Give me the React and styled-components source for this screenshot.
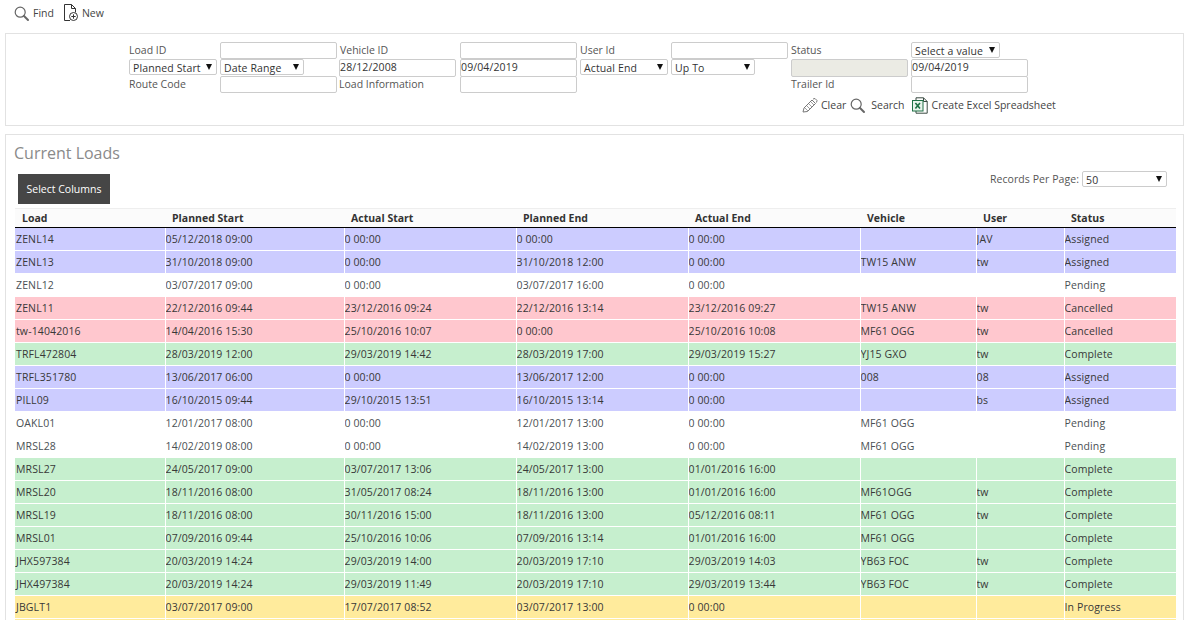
import React from 'react';
import styled, { createGlobalStyle } from 'styled-components';

const GlobalStyle = createGlobalStyle`
  html, body {
    margin: 0;
    padding: 0;
    height: 620px;
    overflow: hidden;
    background: #fff;
    font-family: 'Open Sans', 'Liberation Sans', sans-serif;
    font-size: 10.5px;
    color: #444;
  }
  * { box-sizing: border-box; }
`;

const Page = styled.div`
  width: 1193px;
  height: 620px;
  overflow: hidden;
  padding: 0 9px 0 5px;
`;

const Toolbar = styled.div`
  height: 33px;
  display: flex;
  align-items: flex-start;
  padding: 4px 0 0 9px;
`;

const ToolLink = styled.a`
  display: flex;
  align-items: center;
  gap: ${p => p.$gap || 3}px;
  height: 18px;
  margin-right: ${p => p.$mr || 0}px;
  color: #444;
  white-space: nowrap;
`;

const Panel = styled.div`
  border: 1px solid #e2e2e2;
  background: #fff;
`;

const FilterPanel = styled(Panel)`
  height: 93px;
  padding: 8px 0 0 123px;
`;

const FilterGrid = styled.div`
  display: grid;
  grid-template-columns: 91px 119px 121px 120px 91px 120px 120px 117px;
  grid-auto-rows: 17px;
`;

const FieldLabel = styled.label`
  line-height: 16px;
  color: #555;
  padding-left: ${p => p.$indent || 0}px;
`;

const TextBox = styled.div`
  width: 117px;
  height: ${p => (p.$tall ? 18 : 17)}px;
  border: 1px solid #ccc;
  border-radius: 2px;
  background: ${p => (p.$disabled ? '#ebebe4' : '#fff')};
  line-height: 14px;
  color: #333;
  letter-spacing: 0.012em;
  overflow: hidden;
`;

const Dropdown = styled.div`
  position: relative;
  width: ${p => p.$w}px;
  height: 16px;
  border: 1px solid #ccc;
  border-radius: 2px;
  padding-left: 3px;
  line-height: 17px;
  color: #333;
  background: #fff;
  letter-spacing: 0.012em;
  white-space: nowrap;
`;

const Caret = styled.span`
  position: absolute;
  right: 4px;
  top: 4px;
  width: 0;
  height: 0;
  border-left: 3.5px solid transparent;
  border-right: 3.5px solid transparent;
  border-top: 6px solid #111;
`;

const Actions = styled.div`
  display: flex;
  align-items: center;
  height: 18px;
  margin: 3px 0 0 673px;
`;

const TablePanel = styled(Panel)`
  margin-top: 8px;
  height: 500px;
  padding: 0 8px 0 9px;
`;

const Title = styled.h2`
  margin: 0 0 0 -1px;
  height: 39px;
  padding-top: 6px;
  font-size: 16px;
  line-height: 24px;
  font-weight: 400;
  color: #8a8a8a;
`;

const ControlRow = styled.div`
  display: flex;
  justify-content: space-between;
  height: 34px;
`;

const ColumnsButton = styled.button`
  width: 92px;
  height: 30px;
  margin: 0 0 0 3px;
  border: 0;
  background: #464646;
  color: #fff;
  font: inherit;
  padding: 0;
`;

const PerPage = styled.div`
  display: flex;
  align-items: flex-start;
  gap: 3px;
  margin-top: -3px;
  padding-right: 8px;
  color: #555;
  line-height: 16px;
  letter-spacing: 0.006em;
`;

const LoadsTable = styled.table`
  border-collapse: collapse;
  table-layout: fixed;
  width: 1161px;
  border-top: 1px solid #eee;
`;

const HeadCell = styled.th`
  height: 19px;
  padding: 0 0 0 7px;
  text-align: left;
  font-size: 10.5px;
  font-weight: 700;
  color: #333;
  background: #fbfbfb;
  border-bottom: 1px solid #000;
`;

const rowColours = {
  Assigned: '#ccccff',
  Pending: '#ffffff',
  Cancelled: '#ffc7ce',
  Complete: '#c6efce',
  'In Progress': '#ffeb9c',
};

const Row = styled.tr`
  background: ${p => rowColours[p.$status]};
`;

const Cell = styled.td`
  height: 23px;
  padding: 0;
  border-bottom: 1px solid #fff;
  border-left: 1px dotted ${p => (p.$plain ? 'transparent' : '#fff')};
  color: ${p => (p.$plain ? '#4a5054' : '#383838')};
  letter-spacing: 0.012em;
  white-space: nowrap;
  overflow: hidden;
  &:first-child {
    border-left: 0;
    padding-left: 1px;
  }
`;

const MagnifierIcon = ({ size = 15 }) => (
  <svg width={size} height={size} viewBox="0 0 15 15" fill="none" stroke="#666" strokeWidth="1.2">
    <circle cx="6.2" cy="6.2" r="5" />
    <path d="M10 10l4 4" strokeWidth="1.9" strokeLinecap="round" />
  </svg>
);

const NewDocIcon = () => (
  <svg width="16" height="18" viewBox="0 0 16 18" fill="none" stroke="#333" strokeWidth="1">
    <path d="M7 16.5H1.5V.5h7l4 4v4" />
    <path d="M8.5.5v4h4" />
    <circle cx="10.5" cy="12.5" r="4" fill="#fff" />
    <path d="M10.5 10.3v4.4M8.3 12.5h4.4" />
  </svg>
);

const PencilIcon = () => (
  <svg width="16" height="15" viewBox="0 0 16 15" fill="none" stroke="#777" strokeWidth="1">
    <path d="M1 14l1-4 8-8 3.5 3.5-8 8z" />
    <path d="M3 10l3 3M5 8l3 3M7 6l3 3M9 4l3 3" strokeWidth=".7" />
    <path d="M11 1l2-.5 2 2-.5 2" />
  </svg>
);

const ExcelIcon = () => (
  <svg width="16" height="17" viewBox="0 0 16 17" fill="none">
    <path d="M4 3V.8h7.5L15.2 4.5v11.7H4V14" stroke="#3a4a42" />
    <path d="M11.5.8v3.7h3.7" stroke="#3a4a42" />
    <rect x=".5" y="3.5" width="10.5" height="10.5" fill="#e8f4ec" stroke="#1e7145" />
    <path d="M3.4 6l4.6 5.5M8 6l-4.6 5.5" stroke="#1e7145" strokeWidth="1.6" />
  </svg>
);

const columns = [
  ['Load', 150], ['Planned Start', 179], ['Actual Start', 172], ['Planned End', 172],
  ['Actual End', 172], ['Vehicle', 116], ['User', 88], ['Status', 112],
];

const loads = [
  ['ZENL14', '05/12/2018 09:00', '0 00:00', '0 00:00', '0 00:00', '', 'JAV', 'Assigned'],
  ['ZENL13', '31/10/2018 09:00', '0 00:00', '31/10/2018 12:00', '0 00:00', 'TW15 ANW', 'tw', 'Assigned'],
  ['ZENL12', '03/07/2017 09:00', '0 00:00', '03/07/2017 16:00', '0 00:00', '', '', 'Pending'],
  ['ZENL11', '22/12/2016 09:44', '23/12/2016 09:24', '22/12/2016 13:14', '23/12/2016 09:27', 'TW15 ANW', 'tw', 'Cancelled'],
  ['tw-14042016', '14/04/2016 15:30', '25/10/2016 10:07', '0 00:00', '25/10/2016 10:08', 'MF61 OGG', 'tw', 'Cancelled'],
  ['TRFL472804', '28/03/2019 12:00', '29/03/2019 14:42', '28/03/2019 17:00', '29/03/2019 15:27', 'YJ15 GXO', 'tw', 'Complete'],
  ['TRFL351780', '13/06/2017 06:00', '0 00:00', '13/06/2017 12:00', '0 00:00', '008', '08', 'Assigned'],
  ['PILL09', '16/10/2015 09:44', '29/10/2015 13:51', '16/10/2015 13:14', '0 00:00', '', 'bs', 'Assigned'],
  ['OAKL01', '12/01/2017 08:00', '0 00:00', '12/01/2017 13:00', '0 00:00', 'MF61 OGG', '', 'Pending'],
  ['MRSL28', '14/02/2019 08:00', '0 00:00', '14/02/2019 13:00', '0 00:00', 'MF61 OGG', '', 'Pending'],
  ['MRSL27', '24/05/2017 09:00', '03/07/2017 13:06', '24/05/2017 13:00', '01/01/2016 16:00', '', '', 'Complete'],
  ['MRSL20', '18/11/2016 08:00', '31/05/2017 08:24', '18/11/2016 13:00', '01/01/2016 16:00', 'MF61OGG', 'tw', 'Complete'],
  ['MRSL19', '18/11/2016 08:00', '30/11/2016 15:00', '18/11/2016 13:00', '05/12/2016 08:11', 'MF61 OGG', 'tw', 'Complete'],
  ['MRSL01', '07/09/2016 09:44', '25/10/2016 10:06', '07/09/2016 13:14', '01/01/2016 16:00', 'MF61 OGG', '', 'Complete'],
  ['JHX597384', '20/03/2019 14:24', '29/03/2019 14:00', '20/03/2019 17:10', '29/03/2019 14:03', 'YB63 FOC', 'tw', 'Complete'],
  ['JHX497384', '20/03/2019 14:24', '29/03/2019 11:49', '20/03/2019 17:10', '29/03/2019 13:44', 'YB63 FOC', 'tw', 'Complete'],
  ['JBGLT1', '03/07/2017 09:00', '17/07/2017 08:52', '03/07/2017 13:00', '0 00:00', '', '', 'In Progress'],
];

const Select = ({ w, children }) => (
  <Dropdown $w={w}>
    {children}
    <Caret />
  </Dropdown>
);

export default function App() {
  return (
    <Page>
      <GlobalStyle />
      <Toolbar>
        <ToolLink $gap={4} $mr={9}><MagnifierIcon />Find</ToolLink>
        <ToolLink><NewDocIcon />New</ToolLink>
      </Toolbar>

      <FilterPanel>
        <FilterGrid>
          <FieldLabel>Load ID</FieldLabel>
          <TextBox />
          <FieldLabel $indent={1}>Vehicle ID</FieldLabel>
          <TextBox />
          <FieldLabel>User Id</FieldLabel>
          <TextBox />
          <FieldLabel>Status</FieldLabel>
          <Select w={89}>Select a value</Select>

          <Select w={88}>Planned Start</Select>
          <Select w={84}>Date Range</Select>
          <TextBox $tall>28/12/2008</TextBox>
          <TextBox $tall>09/04/2019</TextBox>
          <Select w={88}>Actual End</Select>
          <Select w={84}>Up To</Select>
          <TextBox $tall $disabled />
          <TextBox $tall>09/04/2019</TextBox>

          <FieldLabel>Route Code</FieldLabel>
          <TextBox />
          <FieldLabel>Load Information</FieldLabel>
          <TextBox />
          <span />
          <span />
          <FieldLabel>Trailer Id</FieldLabel>
          <TextBox />
        </FilterGrid>
        <Actions>
          <ToolLink $mr={4}><PencilIcon />Clear</ToolLink>
          <ToolLink $gap={6} $mr={7}><MagnifierIcon />Search</ToolLink>
          <ToolLink $gap={4}><ExcelIcon />Create Excel Spreadsheet</ToolLink>
        </Actions>
      </FilterPanel>

      <TablePanel>
        <Title>Current Loads</Title>
        <ControlRow>
          <ColumnsButton>Select Columns</ColumnsButton>
          <PerPage>
            Records Per Page:
            <Select w={85}>50</Select>
          </PerPage>
        </ControlRow>
        <LoadsTable>
          <colgroup>
            {columns.map(([name, w]) => <col key={name} style={{ width: w }} />)}
          </colgroup>
          <thead>
            <tr>
              {columns.map(([name]) => <HeadCell key={name}>{name}</HeadCell>)}
            </tr>
          </thead>
          <tbody>
            {loads.map(row => (
              <Row key={row[0]} $status={row[7]}>
                {row.map((value, i) => (
                  <Cell key={i} $plain={row[7] === 'Pending'}>{value}</Cell>
                ))}
              </Row>
            ))}
            <Row $status="In Progress">
              {columns.map(([name]) => <Cell key={name} />)}
            </Row>
          </tbody>
        </LoadsTable>
      </TablePanel>
    </Page>
  );
}
